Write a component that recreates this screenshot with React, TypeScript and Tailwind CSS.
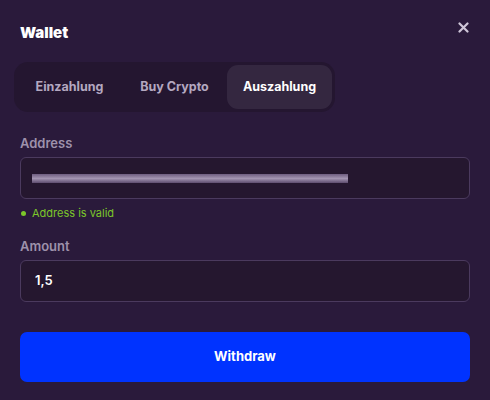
import React from "react";

const tabs = ["Einzahlung", "Buy Crypto", "Auszahlung"];

export default function App() {
  const active = "Auszahlung";
  return (
    <div
      className="w-[490px] h-[400px] bg-[#2a1a3b] px-5 flex flex-col overflow-hidden"
      style={{ fontFamily: "Inter, 'Noto Sans', sans-serif" }}
    >
      {/* header */}
      <div className="flex justify-between items-start pt-[23px]">
        <h1 className="text-[15px] leading-5 font-black text-white">Wallet</h1>
        <button className="mt-[-1px] mr-[1px] text-[#cfc6d8]">
          <svg width="11" height="11" viewBox="0 0 11 11">
            <path d="M1.5 1.5l8 8M9.5 1.5l-8 8" stroke="currentColor" strokeWidth="2.2" strokeLinecap="round" />
          </svg>
        </button>
      </div>

      {/* tabs */}
      <div className="mt-[19px] ml-[-6px] self-start flex p-[3px] rounded-[14px] bg-[#241630]">
        {tabs.map((t) => (
          <div
            key={t}
            className={
              t === active
                ? "w-[105px] h-[44px] flex items-center justify-center rounded-[11px] bg-[#342740] text-white text-[12.5px] font-bold"
                : "w-[105px] h-[44px] flex items-center justify-center rounded-[11px] text-[#b4a8c0] text-[12.5px] font-bold"
            }
          >
            {t}
          </div>
        ))}
      </div>

      {/* address */}
      <label className="mt-[22px] text-[13px] leading-[18px] font-semibold text-[#9e91ab]">Address</label>
      <div className="mt-[5px] h-[42px] rounded-[6px] border border-[#4b3a5e] bg-[#25172f] flex items-center pl-[11px]">
        <div className="w-[316px] h-[9px] bg-gradient-to-b from-[#6f5e80] via-[#a394b1] to-[#5e4d6e]" />
      </div>
      <div className="mt-[6px] flex items-center gap-[6px] pl-[1px]">
        <span className="w-[5px] h-[5px] rounded-full bg-[#7cc72a]" />
        <span className="text-[11px] leading-4 text-[#7cc72a]">Address is valid</span>
      </div>

      {/* amount */}
      <label className="mt-[16px] text-[13px] leading-[18px] font-semibold text-[#9e91ab]">Amount</label>
      <div className="mt-[5px] h-[42px] rounded-[6px] border border-[#4b3a5e] bg-[#25172f] flex items-center pl-[14px]">
        <span className="text-[13px] font-semibold text-white">1,5</span>
      </div>

      {/* action */}
      <button className="mt-[30px] h-[50px] rounded-[7px] bg-[#0033ff] text-white text-[13px] font-bold">
        Withdraw
      </button>
    </div>
  );
}
